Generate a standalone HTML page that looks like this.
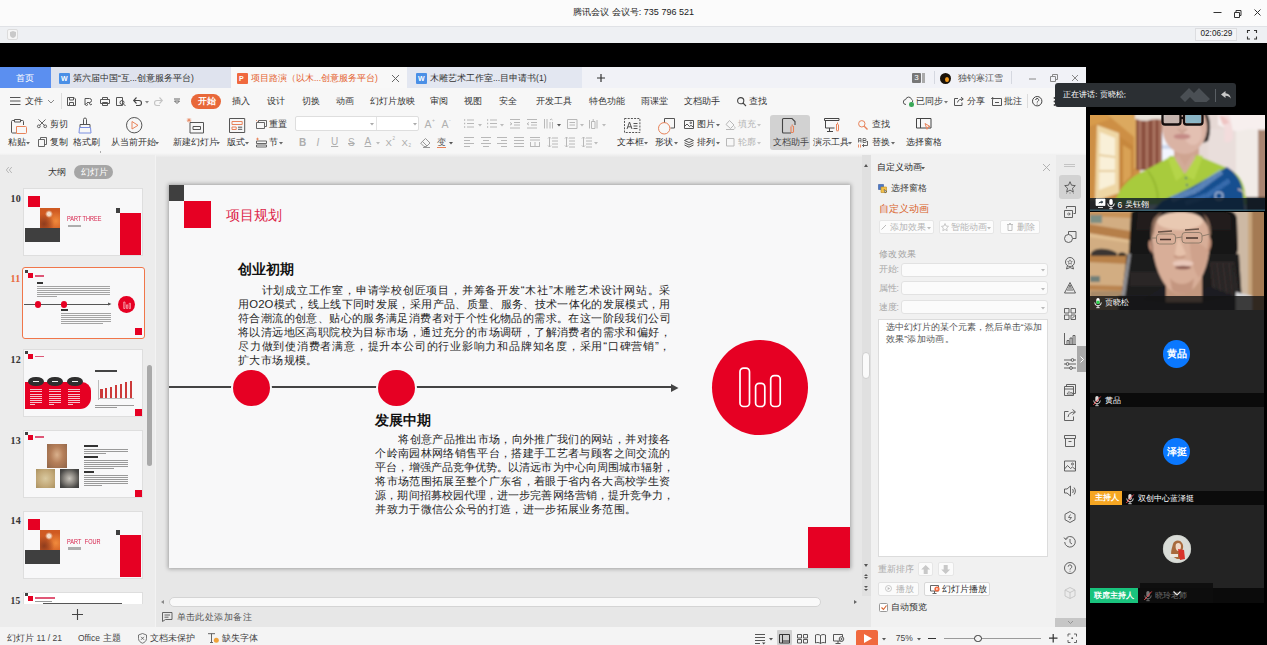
<!DOCTYPE html>
<html lang="zh">
<head>
<meta charset="utf-8">
<title>腾讯会议</title>
<style>
@font-face{font-family:"LibCJK";src:local("Liberation Sans");size-adjust:128%;unicode-range:U+2E80-9FFF,U+3000-303F,U+FF00-FFEF}
html,body{margin:0;padding:0}
body{width:1267px;height:645px;position:relative;overflow:hidden;background:#000;font-family:"LibCJK","Liberation Sans",sans-serif;font-size:8.5px;color:#333;line-height:1}
.a{position:absolute;box-sizing:border-box}
.t{position:absolute;white-space:nowrap;text-align:justify;text-align-last:justify;line-height:1}
.c{position:absolute;white-space:nowrap;text-align:center;line-height:1}
svg{position:absolute;overflow:visible}

</style>
</head>
<body>
<!-- p10_chrome -->
<div class="a" style="left:0px;top:0px;width:1267px;height:26px;background:#fbfbfb"></div>
<div class="t" style="left:573px;top:8px;width:121px;font-size:9px;color:#222">腾讯会议 会议号: 735 796 521</div>
<svg style="left:1211px;top:5px" width="52" height="15" fill="none" stroke="#333" stroke-width="1"><path d="M2.5 7.5h8"/><path d="M23.500 7.500h5v5h-5z M25 7.500V5.500h5v5h-1.500"/><path d="M43.5 4.500l6 6M49.500 4.500l-6 6"/></svg>
<div class="a" style="left:0px;top:26px;width:1267px;height:17px;background:#eef0f3;border-top:1px solid #e0e2e6"></div>
<div class="a" style="left:7px;top:28.5px;width:11px;height:11px;background:#f6f6f6;border:1px solid #dcdcdc;border-radius:2px"></div>
<svg style="left:10px;top:30.5px" width="6" height="7" ><path d="M3 0l3 1v3c0 1.600-1.500 2.600-3 3-1.500-.4-3-1.400-3-3V1z" fill="#c9c9c9"/></svg>
<div class="a" style="left:1195px;top:27.5px;width:42px;height:13.5px;background:#f3f4f6;border:1px solid #dcdde0"></div>
<div class="t" style="left:1200.5px;top:30.4px;width:31.5px;font-size:8.2px;color:#222">02:06:29</div>
<svg style="left:1246.5px;top:29.5px" width="10" height="9.5" fill="none" stroke="#333" stroke-width="1.1"><path d="M.5 3V.5H3M7 .5h2.500V3M9.500 6.500V9H7M3 9H.5V6.500"/></svg>
<div class="a" style="left:0px;top:67px;width:1086px;height:578px;background:#f6f6f6"></div>
<div class="a" style="left:0px;top:67px;width:1086px;height:21px;background:#f1f2f7"></div>
<div class="a" style="left:0px;top:87.5px;width:1086px;height:1px;background:#e6e8ee"></div>
<div class="a" style="left:0px;top:67px;width:51px;height:21px;background:#5b8ff0"></div>
<div class="t" style="left:16px;top:74.25px;width:18px;font-size:8.5px;color:#fff">首页</div>
<div class="a" style="left:51px;top:67px;width:180px;height:21px;background:#dfe3ee"></div>
<div class="a" style="left:59px;top:72.5px;width:11px;height:11px;background:#4a8fe6;border-radius:1px"></div>
<div class="t" style="left:61px;top:75px;width:7px;font-size:7px;color:#fff;font-weight:bold">W</div>
<div class="t" style="left:73px;top:74.25px;width:120px;font-size:8.5px;color:#333">第六届中国“互...创意服务平台)</div>
<div class="a" style="left:231px;top:67px;width:176px;height:21px;background:#f8f8f8"></div>
<div class="a" style="left:237px;top:72.5px;width:11px;height:11px;background:#f0693e;border-radius:1px"></div>
<div class="t" style="left:239px;top:75px;width:7px;font-size:7px;color:#fff;font-weight:bold">P</div>
<div class="t" style="left:251px;top:74.25px;width:121px;font-size:8.5px;color:#e4622f">项目路演（以木...创意服务平台)</div>
<svg style="left:392px;top:75px" width="7" height="7" stroke="#666" stroke-width="1"><path d="M0 0l7 7M7 0l-7 7"/></svg>
<div class="a" style="left:407px;top:67px;width:175px;height:21px;background:#e3e7f1"></div>
<div class="a" style="left:416px;top:72.5px;width:11px;height:11px;background:#4a8fe6;border-radius:1px"></div>
<div class="t" style="left:418px;top:75px;width:7px;font-size:7px;color:#fff;font-weight:bold">W</div>
<div class="t" style="left:430px;top:74.25px;width:111px;font-size:8.5px;color:#333">木雕艺术工作室...目申请书(1)</div>
<svg style="left:597px;top:74px" width="8" height="8" stroke="#333" stroke-width="1.2"><path d="M4 0v8M0 4h8"/></svg>
<div class="a" style="left:912px;top:73px;width:9px;height:10px;background:#777;border-radius:1px"></div>
<div class="t" style="left:914.3px;top:74.3px;width:5px;font-size:8px;color:#fff">3</div>
<div class="a" style="left:922px;top:73px;width:3px;height:10px;background:#aaa"></div>
<div class="a" style="left:934px;top:71px;width:1px;height:13px;background:#d5d8e0"></div>
<div class="a" style="left:940px;top:72.5px;width:11px;height:11px;background:#1a1208;border-radius:50%"></div>
<div class="a" style="left:945px;top:77px;width:4px;height:5px;background:#f59b1c;border-radius:50%"></div>
<div class="t" style="left:958px;top:74.25px;width:42px;font-size:8.5px;color:#555">独钓寒江雪</div>
<div class="a" style="left:1011px;top:71px;width:1px;height:13px;background:#d5d8e0"></div>
<svg style="left:1029px;top:72px" width="50" height="12" fill="none" stroke="#888" stroke-width="1"><path d="M0 7h7"/><path d="M21.500 4.500h5v5h-5z M23.500 4.500V2.500h5v5h-2"/><path d="M43 3l6 6M49 3l-6 6"/></svg>

<!-- p20_menu -->
<div class="a" style="left:0px;top:88px;width:1086px;height:67px;background:#f7f7f7"></div>
<svg style="left:10px;top:97px" width="11" height="8" stroke="#555" stroke-width="1"><path d="M0 .5h10.500M0 4h10.500M0 7.500h10.500"/></svg>
<div class="t" style="left:24.7px;top:96.75px;width:17px;font-size:8.5px;color:#333">文件</div>
<svg style="left:47.5px;top:99.5px" width="6" height="4" fill="none" stroke="#888" stroke-width="1"><path d="M0 0l3 3 3-3"/></svg>
<div class="a" style="left:60.5px;top:93px;width:1px;height:16px;background:#dcdcdc"></div>
<svg style="left:67px;top:96.5px" width="9" height="9" fill="none" stroke="#555" stroke-width="1"><path d="M.5 .5h6.500l1.500 1.500v6.500h-8z M2.500 .5v2.500h4V.5 M2.500 8.500v-3h4v3"/></svg>
<svg style="left:84px;top:96.5px" width="9" height="9" fill="none" stroke="#555" stroke-width="1"><path d="M1 1.500h4.500a2 2 0 0 1 0 4H3 M1 1.500V8 M5 5.500l1.500 2.500 1.500-1"/><circle cx="2.500" cy="7.500" r="1"/></svg>
<svg style="left:100px;top:96.5px" width="10" height="9" fill="none" stroke="#555" stroke-width="1"><path d="M2.500 2.500V.5h5v2 M.5 2.500h9v4h-9z M2.500 5.500h5v3h-5z"/></svg>
<svg style="left:116px;top:96.5px" width="10" height="9" fill="none" stroke="#555" stroke-width="1"><path d="M.5 .5h6v8h-6z"/><circle cx="6" cy="5.500" r="2"/><path d="M7.500 7l2 2"/></svg>
<svg style="left:133px;top:97px" width="9" height="8" fill="none" stroke="#444" stroke-width="1.1"><path d="M1 3.500h5a2.500 2.500 0 0 1 0 5H3 M3.500 .5L.7 3.500l2.800 3"/></svg>
<svg style="left:145px;top:100.5px" width="4" height="3" ><path d="M0 0h4L2 2.500z" fill="#888"/></svg>
<svg style="left:154px;top:97px" width="9" height="8" fill="none" stroke="#c4c4c4" stroke-width="1.1"><path d="M8 3.500H3a2.500 2.500 0 0 0 0 5h3 M5.500 .5l2.800 3-2.800 3"/></svg>
<svg style="left:174px;top:99px" width="6" height="5" fill="none" stroke="#555" stroke-width=".9"><path d="M0 0h6M.5 2l2.500 2.500 2.500-2.500z"/></svg>
<div class="a" style="left:190.5px;top:94px;width:30.5px;height:14.5px;background:#e8683a;border-radius:7.5px"></div>
<div class="t" style="left:197.5px;top:97.05px;width:16.5px;font-size:8.5px;color:#fff;font-weight:bold">开始</div>
<div class="t" style="left:232.3px;top:97.05px;width:16.5px;font-size:8.5px;color:#333">插入</div>
<div class="t" style="left:267px;top:97.05px;width:16.5px;font-size:8.5px;color:#333">设计</div>
<div class="t" style="left:301.5px;top:97.05px;width:16.5px;font-size:8.5px;color:#333">切换</div>
<div class="t" style="left:335.6px;top:97.05px;width:16.8px;font-size:8.5px;color:#333">动画</div>
<div class="t" style="left:370px;top:97.05px;width:42.6px;font-size:8.5px;color:#333">幻灯片放映</div>
<div class="t" style="left:430px;top:97.05px;width:16.7px;font-size:8.5px;color:#333">审阅</div>
<div class="t" style="left:464.3px;top:97.05px;width:16.7px;font-size:8.5px;color:#333">视图</div>
<div class="t" style="left:499px;top:97.05px;width:16.6px;font-size:8.5px;color:#333">安全</div>
<div class="t" style="left:535.6px;top:97.05px;width:34px;font-size:8.5px;color:#333">开发工具</div>
<div class="t" style="left:589.3px;top:97.05px;width:34.1px;font-size:8.5px;color:#333">特色功能</div>
<div class="t" style="left:640.6px;top:97.05px;width:26px;font-size:8.5px;color:#333">雨课堂</div>
<div class="t" style="left:684px;top:97.05px;width:34px;font-size:8.5px;color:#333">文档助手</div>
<div class="t" style="left:748.7px;top:97.05px;width:16.9px;font-size:8.5px;color:#333">查找</div>
<div class="t" style="left:916px;top:97.05px;width:25.3px;font-size:8.5px;color:#333">已同步</div>
<div class="t" style="left:967.3px;top:97.05px;width:16.4px;font-size:8.5px;color:#333">分享</div>
<div class="t" style="left:1004.4px;top:97.05px;width:16.5px;font-size:8.5px;color:#333">批注</div>
<svg style="left:737px;top:96.5px" width="9" height="9" fill="none" stroke="#444" stroke-width="1.1"><circle cx="3.700" cy="3.700" r="3.100"/><path d="M6 6l3 3"/></svg>
<svg style="left:903px;top:97px" width="11" height="9" fill="none" stroke="#555" stroke-width="1"><path d="M3 7.500a2.500 2.500 0 0 1-.3-5 3 3 0 0 1 5.800-.3A2.300 2.300 0 0 1 9.500 5"/></svg>
<div class="a" style="left:909px;top:102px;width:4.5px;height:4.5px;background:#3aa757;border-radius:50%"></div>
<svg style="left:943.5px;top:100.5px" width="4" height="3" ><path d="M0 0h4L2 2.500z" fill="#777"/></svg>
<svg style="left:954px;top:96.5px" width="10" height="9" fill="none" stroke="#555" stroke-width="1"><path d="M4 1.500H.500v7h7.500V5.500 M3.500 5.500c.5-2.500 2.500-3.500 5.500-3.500 M7 .2L9.300 2 7 3.800"/></svg>
<svg style="left:991px;top:96.5px" width="11" height="9" fill="none" stroke="#555" stroke-width="1"><path d="M3 1.500h7.500v7h-9V3 M.2 1.500h3M1.700 0v3 M4 5.500h4"/></svg>
<div class="a" style="left:1026.5px;top:94px;width:1px;height:14px;background:#dcdcdc"></div>
<svg style="left:1032px;top:96px" width="10.5" height="10.5" fill="none" stroke="#444" stroke-width="1"><circle cx="5.200" cy="5.200" r="4.700"/><path d="M3.700 4a1.500 1.500 0 1 1 2.200 1.300c-.5.3-.7.600-.7 1.200M5.200 7.700v.8"/></svg>
<svg style="left:1053px;top:97px" width="3" height="9" fill="#444"><circle cx="1.500" cy="1" r=".9"/><circle cx="1.500" cy="4.500" r=".9"/><circle cx="1.500" cy="8" r=".9"/></svg>

<!-- p30_ribbon -->
<svg style="left:10.5px;top:117.5px" width="16" height="16" fill="none" stroke-width="1"><path d="M3.500 2.500H1.500a1 1 0 0 0-1 1V14a1 1 0 0 0 1 1H5 M9.500 2.500h2a1 1 0 0 1 1 1V7" stroke="#555"/><path d="M3.500 1.500h6v2.500h-6z" stroke="#555"/><path d="M5.500 8.500h9a1 1 0 0 1 1 1v5a1 1 0 0 1-1 1h-9z" stroke="#e8835a"/></svg>
<div class="t" style="left:7.6px;top:138.05px;width:17px;font-size:8.5px">粘贴</div>
<svg style="left:26.3px;top:141.8px" width="4" height="3" ><path d="M0 0h4L2 2.500z" fill="#666"/></svg>
<svg style="left:37px;top:119px" width="10" height="9" fill="none" stroke="#555" stroke-width=".9"><path d="M1.500 .5l6 6M8.500 .5l-6 6"/><circle cx="1.800" cy="7.300" r="1.400"/><circle cx="8.200" cy="7.300" r="1.400"/></svg>
<div class="t" style="left:49.7px;top:120.05px;width:16.5px;font-size:8.5px">剪切</div>
<svg style="left:37.5px;top:137px" width="9" height="10" fill="none" stroke="#555" stroke-width=".9"><path d="M2.500 2.500V.5h6v7h-2 M.5 2.500h6v7h-6z"/></svg>
<div class="t" style="left:49.7px;top:138.05px;width:16.5px;font-size:8.5px">复制</div>
<svg style="left:78px;top:117.5px" width="14" height="16" fill="none" stroke-width="1"><path d="M5.500 6.500V1.500a1.500 1.500 0 0 1 3 0v5" stroke="#555"/><path d="M2 6.500h10v3H2z" stroke="#555"/><path d="M1.500 9.500h11l.5 5.500H1z" stroke="#7b8fe0"/></svg>
<div class="t" style="left:72.7px;top:138.05px;width:25px;font-size:8.5px">格式刷</div>
<svg style="left:97.5px;top:150.5px" width="3" height="3" fill="none" stroke="#999" stroke-width=".8"><path d="M0 2.500h2.500V0"/></svg>
<svg style="left:126px;top:117px" width="16.5" height="16.5" fill="none" stroke-width="1"><circle cx="8.200" cy="8.200" r="7.700" stroke="#555"/><path d="M6 4.500v7.500l6-3.700z" stroke="#e8835a"/></svg>
<div class="t" style="left:111px;top:138.05px;width:41.8px;font-size:8.5px">从当前开始</div>
<svg style="left:154.6px;top:141.8px" width="4" height="3" ><path d="M0 0h4L2 2.500z" fill="#666"/></svg>
<svg style="left:187px;top:117.5px" width="17" height="16" fill="none" stroke-width="1"><path d="M3 4.500h13.500v10.500H3z" stroke="#555"/><path d="M6 8.500h7.500v3H6z" stroke="#555"/><path d="M2 0v4.500M-.2 2.200h4.500M.4 .6l3.200 3.200M3.600 .6L.4 3.800" stroke="#e8835a" stroke-width=".8"/></svg>
<div class="t" style="left:172.5px;top:138.05px;width:41.5px;font-size:8.5px">新建幻灯片</div>
<svg style="left:215.7px;top:141.8px" width="4" height="3" ><path d="M0 0h4L2 2.500z" fill="#666"/></svg>
<svg style="left:229.3px;top:118px" width="16.2" height="15" fill="none" stroke-width="1"><path d="M.5 .5h15.200v14H.5z" stroke="#555"/><path d="M3 3.500h10.200v3H3z M3 9h4.200v2.500H3z" stroke="#e8835a"/><path d="M9 9.200h4.200M9 11.300h4.200" stroke="#555"/></svg>
<div class="t" style="left:226.5px;top:138.05px;width:16.7px;font-size:8.5px">版式</div>
<svg style="left:245px;top:141.8px" width="4" height="3" ><path d="M0 0h4L2 2.500z" fill="#666"/></svg>
<svg style="left:256px;top:119.5px" width="11" height="9" fill="none" stroke-width=".9"><path d="M2.500 2V.5h8v6H9" stroke="#555"/><path d="M.5 2.500h8v6h-8z" stroke="#555"/><path d="M0 0l1.500 1.500" stroke="#e8835a"/></svg>
<div class="t" style="left:269px;top:120.05px;width:16.4px;font-size:8.5px">重置</div>
<svg style="left:256px;top:137.5px" width="11" height="9" fill="none" stroke-width=".9"><path d="M.5 3h10v2.500H.5z M.5 7h10v2H.5z" stroke="#555"/><path d="M1.500 -.3v2.600M.2 1h2.600" stroke="#e8835a"/></svg>
<div class="t" style="left:269px;top:138.05px;width:8px;font-size:8.5px">节</div>
<svg style="left:278.8px;top:141.8px" width="4" height="3" ><path d="M0 0h4L2 2.500z" fill="#666"/></svg>
<div class="a" style="left:295px;top:116px;width:124px;height:15px;background:#fff;border:1px solid #dedede;border-radius:2px"></div>
<div class="a" style="left:376px;top:117px;width:1px;height:13px;background:#e3e3e3"></div>
<svg style="left:370px;top:123px" width="4" height="3" ><path d="M0 0h4L2 2.500z" fill="#aaa"/></svg>
<svg style="left:413px;top:123px" width="4" height="3" ><path d="M0 0h4L2 2.500z" fill="#aaa"/></svg>
<div class="t" style="left:424.5px;top:119.25px;width:7px;font-size:10.5px;color:#b0b0b0">A</div>
<div class="t" style="left:432px;top:118px;width:3px;font-size:5px;color:#b0b0b0">+</div>
<div class="t" style="left:441.5px;top:119.25px;width:7px;font-size:10.5px;color:#b0b0b0">A</div>
<div class="t" style="left:449px;top:118px;width:3px;font-size:5px;color:#b0b0b0">-</div>
<svg style="left:464.4px;top:119px" width="10" height="10" fill="none" stroke="#b8b8b8" stroke-width="1"><path d="M3 1h7M3 4.500h7M3 8h7"/><path d="M0 1h1.200M0 4.500h1.200M0 8h1.200" stroke-width="1.300"/></svg>
<svg style="left:477.5px;top:123.5px" width="4" height="3" ><path d="M0 0h4L2 2.500z" fill="#bbb"/></svg>
<svg style="left:486.6px;top:119px" width="10" height="10" fill="none" stroke="#b8b8b8" stroke-width="1"><path d="M3 1h7M3 4.500h7M3 8h7"/><path d="M0 1h1.200M0 4.500h1.200M0 8h1.200" stroke-width="1.300"/></svg>
<svg style="left:499.5px;top:123.5px" width="4" height="3" ><path d="M0 0h4L2 2.500z" fill="#bbb"/></svg>
<svg style="left:510.4px;top:119px" width="10" height="10" fill="none" stroke="#b8b8b8" stroke-width="1"><path d="M0 .5h10M4 3.500h6M4 6h6M0 9h10M0 3.500l2 1.300-2 1.300"/></svg>
<svg style="left:526.8px;top:119px" width="10" height="10" fill="none" stroke="#b8b8b8" stroke-width="1"><path d="M0 .5h10M4 3.500h6M4 6h6M0 9h10M2 3.500l-2 1.300 2 1.300"/></svg>
<svg style="left:544px;top:119px" width="10" height="10" fill="none" stroke="#b8b8b8" stroke-width="1"><path d="M.5 0v9.500M3 0v9.500M6 3v6.500M8.500 3v6.500M6 1l1.200-1 1.300 1"/></svg>
<svg style="left:557px;top:123.5px" width="4" height="3" ><path d="M0 0h4L2 2.500z" fill="#555"/></svg>
<svg style="left:566.7px;top:119px" width="10" height="10" fill="none" stroke="#b8b8b8" stroke-width="1"><path d="M.5 .5h9.500v9H.5z M2.500 3.500h5.500M2.500 6h5.500"/></svg>
<svg style="left:579.8px;top:123.5px" width="4" height="3" ><path d="M0 0h4L2 2.500z" fill="#bbb"/></svg>
<svg style="left:588.9px;top:119px" width="10" height="10" fill="none" stroke="#b8b8b8" stroke-width="1"><path d="M2.500 2.500h3.500v7H2.500z M4.200 0v2.500 M.5 1v8.500M8 1v8.500"/></svg>
<svg style="left:602px;top:123.5px" width="4" height="3" ><path d="M0 0h4L2 2.500z" fill="#bbb"/></svg>
<svg style="left:464.4px;top:137px" width="10" height="10" fill="none" stroke="#b8b8b8" stroke-width="1"><path d="M0 .5h10M0 3.500h6M0 6.500h10M0 9.500h6"/></svg>
<svg style="left:480.8px;top:137px" width="10" height="10" fill="none" stroke="#b8b8b8" stroke-width="1"><path d="M0 .5h10M2 3.500h6M0 6.500h10M2 9.500h6"/></svg>
<svg style="left:497.2px;top:137px" width="10" height="10" fill="none" stroke="#b8b8b8" stroke-width="1"><path d="M0 .5h10M4 3.500h6M0 6.500h10M4 9.500h6"/></svg>
<svg style="left:513.6px;top:137px" width="10" height="10" fill="none" stroke="#b8b8b8" stroke-width="1"><path d="M0 .5h10M0 3.500h10M0 6.500h10M0 9.500h10"/></svg>
<svg style="left:530px;top:137px" width="10" height="10" fill="none" stroke="#b8b8b8" stroke-width="1"><path d="M0 .5h10M0 3h10M.5 5v4M5 5v4M9.500 5v4M0 9.500h10"/></svg>
<svg style="left:548.2px;top:137px" width="10" height="10" fill="none" stroke="#b8b8b8" stroke-width="1"><path d="M4 1h6M4 4h6M4 7h6M4 10h6M1.500 0v10M0 1.500L1.500 0 3 1.500M0 8.500L1.500 10 3 8.500" /></svg>
<svg style="left:564.9px;top:137px" width="10" height="10" fill="none" stroke="#b8b8b8" stroke-width="1"><path d="M4 1h6M4 4h6M4 7h6M4 10h6M1.500 0v10M0 1.500L1.500 0 3 1.500M0 8.500L1.500 10 3 8.500" /></svg>
<svg style="left:581.8px;top:137px" width="10" height="10" fill="none" stroke="#b8b8b8" stroke-width="1"><path d="M4 1h6M4 4h6M4 7h6M4 10h6M1.500 0v10M0 1.500L1.500 0 3 1.500M0 8.500L1.500 10 3 8.500" /></svg>
<svg style="left:593.7px;top:141.5px" width="4" height="3" ><path d="M0 0h4L2 2.500z" fill="#bbb"/></svg>
<div class="t" style="left:299px;top:137.5px;width:7px;font-size:10px;color:#adadad;font-weight:bold">B</div>
<div class="t" style="left:316.5px;top:137.5px;width:4px;font-size:10px;color:#adadad;font-style:italic">I</div>
<div class="t" style="left:331px;top:137.2px;width:7.5px;font-size:10px;color:#adadad;text-decoration:underline">U</div>
<div class="t" style="left:348px;top:137.5px;width:7px;font-size:10px;color:#adadad;text-decoration:line-through">S</div>
<div class="t" style="left:364.5px;top:137px;width:7px;font-size:10px;color:#adadad;text-decoration:underline">A</div>
<svg style="left:376px;top:141.5px" width="4" height="3" ><path d="M0 0h4L2 2.500z" fill="#bbb"/></svg>
<div class="t" style="left:385.5px;top:138.25px;width:7px;font-size:9.5px;color:#adadad">X</div>
<div class="t" style="left:392.5px;top:136.75px;width:3px;font-size:4.5px;color:#adadad">2</div>
<div class="t" style="left:401.5px;top:138.25px;width:7px;font-size:9.5px;color:#adadad">X</div>
<div class="t" style="left:408.5px;top:143.75px;width:3px;font-size:4.5px;color:#adadad">2</div>
<svg style="left:419.5px;top:137.5px" width="11" height="10" fill="none" stroke="#8c8c8c" stroke-width=".9"><path d="M4 8.500L.700 5.200 5.500 .5l4.500 4.500L6.500 8.500z M2.500 3.500l4.500 4.500 M3 9.500h7"/></svg>
<div class="t" style="left:436.5px;top:137.8px;width:9px;font-size:9px;color:#555">变</div>
<div class="a" style="left:436.5px;top:146.5px;width:9px;height:1px;background:#e8835a"></div>
<svg style="left:449.2px;top:141.5px" width="4" height="3" ><path d="M0 0h4L2 2.500z" fill="#555"/></svg>
<svg style="left:624.2px;top:118px" width="16.4" height="15" fill="none" stroke="#555" stroke-width="1"><path d="M.5 .5h15.400v14H.5z" stroke-dasharray="2 1.200"/><path d="M3 11l2.500-7 2.500 7M3.800 8.800h3.400M9.500 5.500h4M9.500 8h4M9.500 10.500h4" /></svg>
<div class="t" style="left:617.4px;top:138.05px;width:25.2px;font-size:8.5px">文本框</div>
<svg style="left:644.2px;top:141.8px" width="4" height="3" ><path d="M0 0h4L2 2.500z" fill="#666"/></svg>
<svg style="left:658.3px;top:117.5px" width="17" height="16.5" fill="none" stroke-width="1"><path d="M6.500 5V.5h10v9.500H12.500" stroke="#555"/><circle cx="6.200" cy="10.300" r="5.700" stroke="#e8835a"/></svg>
<div class="t" style="left:655px;top:138.05px;width:16.7px;font-size:8.5px">形状</div>
<svg style="left:673.5px;top:141.8px" width="4" height="3" ><path d="M0 0h4L2 2.500z" fill="#666"/></svg>
<svg style="left:683.5px;top:119.5px" width="10" height="9" fill="none" stroke="#555" stroke-width="1"><path d="M.5 .5h9v8h-9z M.5 6.500l2.500-2.500 2.500 2.500 1.500-1.200 2.500 2"/><circle cx="6.800" cy="2.800" r=".8"/></svg>
<div class="t" style="left:696.9px;top:120.05px;width:16.4px;font-size:8.5px">图片</div>
<svg style="left:715.6px;top:123.8px" width="4" height="3" ><path d="M0 0h4L2 2.500z" fill="#666"/></svg>
<svg style="left:683.5px;top:137.5px" width="10" height="9.5" fill="none" stroke="#555" stroke-width="1"><path d="M5 .5l4.500 2L5 4.500 .5 2.500z M.5 4.800L5 7l4.500-2.200 M.5 7L5 9.200 9.500 7"/></svg>
<div class="t" style="left:696.9px;top:138.05px;width:16.4px;font-size:8.5px">排列</div>
<svg style="left:715.6px;top:141.8px" width="4" height="3" ><path d="M0 0h4L2 2.500z" fill="#666"/></svg>
<svg style="left:725px;top:119.5px" width="11" height="10" fill="none" stroke="#b8b8b8" stroke-width="1"><path d="M4.500 .5L9 5 5.500 8.500 1 4.500z M9.500 6.500c.8 1 .8 2 0 2.300M1 9.500h8"/></svg>
<div class="t" style="left:738.3px;top:120.05px;width:16.4px;font-size:8.5px;color:#b5b5b5">填充</div>
<svg style="left:756.8px;top:123.8px" width="4" height="3" ><path d="M0 0h4L2 2.500z" fill="#c4c4c4"/></svg>
<svg style="left:726px;top:138px" width="8.5" height="8.5" fill="none" stroke="#b8b8b8" stroke-width="1"><path d="M.5 .5h7.500v7.500H.5z"/></svg>
<div class="t" style="left:738.3px;top:138.05px;width:16.4px;font-size:8.5px;color:#b5b5b5">轮廓</div>
<svg style="left:756.8px;top:141.8px" width="4" height="3" ><path d="M0 0h4L2 2.500z" fill="#c4c4c4"/></svg>
<div class="a" style="left:770px;top:115px;width:39.5px;height:34.5px;background:#d2d2d2;border-radius:3px"></div>
<svg style="left:782px;top:117.5px" width="14" height="16" fill="none" stroke-width="1.100"><path d="M9 15H1.500a1 1 0 0 1-1-1V1.500a1 1 0 0 1 1-1H10l3 3V7" stroke="#444"/><path d="M9 8.500v5.500M11.500 8v6M9 14.500h2.500M10.200 6.500v2" stroke="#e8835a"/></svg>
<div class="t" style="left:773.2px;top:138.05px;width:33.3px;font-size:8.5px;color:#444">文档助手</div>
<svg style="left:824px;top:118px" width="16.5" height="15" fill="none" stroke-width="1"><path d="M.5 .5h14.500v2H.5z M1.500 2.500v7.500h9 M5.500 10v3M3 13.500h6" stroke="#444"/><path d="M12.500 6v6.500M14.500 6.500v6M12.500 12.800h2M13.500 4.500v2" stroke="#e8835a"/></svg>
<div class="t" style="left:812.8px;top:138.05px;width:33.6px;font-size:8.5px">演示工具</div>
<svg style="left:848.2px;top:141.8px" width="4" height="3" ><path d="M0 0h4L2 2.500z" fill="#666"/></svg>
<svg style="left:858px;top:119.5px" width="10" height="10" fill="none" stroke-width="1"><circle cx="3.800" cy="3.800" r="3.200" stroke="#e8835a"/><path d="M6.200 6.200l3.300 3.300" stroke="#e8835a" stroke-width="1.400"/></svg>
<div class="t" style="left:871.7px;top:120.05px;width:16.9px;font-size:8.5px">查找</div>
<svg style="left:857.5px;top:137.5px" width="12" height="10" fill="none" stroke-width=".9"><path d="M.5 4.500V.5h2.500v4M.5 2.800h2.500 M5 .5h2a1 1 0 0 1 0 2H5zM5 2.500h2.300a1 1 0 0 1 0 2H5z" stroke="#555" stroke-width=".8"/><path d="M9.500 3v4.500H4.500M6 6l-1.500 1.500L6 9" stroke="#555"/><path d="M.5 6.500v3M2.500 6.500v3" stroke="#e8835a"/></svg>
<div class="t" style="left:871.7px;top:138.05px;width:16.9px;font-size:8.5px">替换</div>
<svg style="left:890.6px;top:141.8px" width="4" height="3" ><path d="M0 0h4L2 2.500z" fill="#666"/></svg>
<svg style="left:915.6px;top:118px" width="15.6" height="15" fill="none" stroke-width="1"><path d="M.5 .5h14.500v9.500H.5z M4.500 .5v9.500" stroke="#444"/><path d="M9 5.500l5 3-2.200.5-.8 2.300z" stroke="#e8835a" fill="#f7f7f7"/></svg>
<div class="t" style="left:906.2px;top:138.05px;width:33.8px;font-size:8.5px">选择窗格</div>

<!-- p40_work -->
<div class="a" style="left:0px;top:155px;width:1086px;height:472px;background:#e7e7e7"></div>
<div class="a" style="left:0px;top:152.5px;width:1086px;height:4.5px;background:linear-gradient(#f7f7f7,#e9e9e9)"></div>
<div class="a" style="left:0px;top:155px;width:155px;height:472px;background:#ececec"></div>
<div class="a" style="left:154.5px;top:155px;width:1.5px;height:472px;background:#f3f3f3"></div>
<svg style="left:5.5px;top:167px" width="6" height="6" fill="none" stroke="#aaa" stroke-width=".8"><path d="M2.800 0L.3 3l2.500 3M5.800 0L3.300 3l2.500 3"/></svg>
<div class="t" style="left:48px;top:167.55px;width:17.5px;font-size:8.5px;color:#333">大纲</div>
<div class="a" style="left:73.7px;top:164.7px;width:39.7px;height:14px;background:#a6a6a6;border-radius:7px"></div>
<div class="t" style="left:80.5px;top:167.55px;width:26px;font-size:8.5px;color:#fff">幻灯片</div>
<div class="t" style="left:10.5px;top:193.5px;width:10.5px;font-size:10px;color:#333;font-family:'Liberation Serif',serif;font-weight:bold;letter-spacing:.3px">10</div>
<div class="a" style="left:22.5px;top:188px;width:120px;height:68px;background:#f8f8f9;border:1px solid #dedede"></div>
<div class="a" style="left:28px;top:196px;width:11.5px;height:11px;background:#e60023"></div>
<div class="a" style="left:40px;top:207.5px;width:19.5px;height:20px;background:#c8541f;background:radial-gradient(circle at 45% 30%,#f3dcc8 0,#f3dcc8 9%,rgba(243,220,200,0) 22%),radial-gradient(circle at 20% 80%,#8f3d1e 0,rgba(143,61,30,0) 45%),radial-gradient(circle at 80% 65%,#f08a3c 0,rgba(240,138,60,0) 50%),#cf5a22"></div>
<div class="a" style="left:25px;top:227.5px;width:34.5px;height:14px;background:#3f3f3f"></div>
<div class="t" style="left:67.3px;top:215.2px;width:46px;font-size:7.6px;color:#d6204a;transform:scaleX(.73);transform-origin:0 50%">PART THREE</div>
<div class="a" style="left:67.5px;top:224.5px;width:13px;height:2.5px;background:#9a9a9a;opacity:.8"></div>
<div class="a" style="left:115.7px;top:207.5px;width:4.7px;height:5px;background:#3f3f3f"></div>
<div class="a" style="left:120.4px;top:212.5px;width:20.6px;height:42px;background:#e60023"></div>
<div class="t" style="left:10.5px;top:274.2px;width:10.5px;font-size:10px;color:#e8683a;font-family:'Liberation Serif',serif;font-weight:bold;letter-spacing:.3px">11</div>
<div class="a" style="left:21.5px;top:267.2px;width:123.5px;height:71.5px;background:#f8f8f9;border:1.500px solid #f0764a;border-radius:3px"></div>
<div class="a" style="left:24.5px;top:270.2px;width:3px;height:3px;background:#3f3f3f"></div>
<div class="a" style="left:27.5px;top:273.2px;width:5px;height:5px;background:#e60023"></div>
<div class="a" style="left:34.5px;top:274.9px;width:9px;height:1.8px;background:#d6204a;opacity:.75"></div>
<div class="a" style="left:36.5px;top:282.2px;width:6px;height:1.6px;background:#333"></div>
<div class="a" style="left:36.5px;top:285.5px;width:73px;height:1px;background:#a4a4a4"></div>
<div class="a" style="left:36.5px;top:287.55px;width:73px;height:1px;background:#a4a4a4"></div>
<div class="a" style="left:36.5px;top:289.6px;width:73px;height:1px;background:#a4a4a4"></div>
<div class="a" style="left:36.5px;top:291.65px;width:73px;height:1px;background:#a4a4a4"></div>
<div class="a" style="left:36.5px;top:293.7px;width:73px;height:1px;background:#a4a4a4"></div>
<div class="a" style="left:36.5px;top:295.75px;width:20px;height:1px;background:#a4a4a4"></div>
<div class="a" style="left:24px;top:303.9px;width:86px;height:0.8px;background:#555"></div>
<svg style="left:108px;top:302.2px" width="4" height="4" ><path d="M0 .5l3.500 1.500L0 3.500z" fill="#555"/></svg>
<div class="a" style="left:35px;top:301.2px;width:6.4px;height:6.4px;background:#e60023;border-radius:50%"></div>
<div class="a" style="left:60.5px;top:301.2px;width:6.4px;height:6.4px;background:#e60023;border-radius:50%"></div>
<div class="a" style="left:60.5px;top:309.2px;width:7px;height:1.6px;background:#333"></div>
<div class="a" style="left:60.5px;top:312.9px;width:50px;height:1px;background:#a4a4a4"></div>
<div class="a" style="left:60.5px;top:314.95px;width:50px;height:1px;background:#a4a4a4"></div>
<div class="a" style="left:60.5px;top:317px;width:50px;height:1px;background:#a4a4a4"></div>
<div class="a" style="left:60.5px;top:319.05px;width:50px;height:1px;background:#a4a4a4"></div>
<div class="a" style="left:60.5px;top:321.1px;width:50px;height:1px;background:#a4a4a4"></div>
<div class="a" style="left:60.5px;top:323.15px;width:42px;height:1px;background:#a4a4a4"></div>
<div class="a" style="left:117.8px;top:295.9px;width:16.8px;height:16.8px;background:#e60023;border-radius:50%"></div>
<svg style="left:122.5px;top:300.7px" width="8" height="8" fill="none" stroke="#fff" stroke-width=".5"><path d="M.7 7.500V1h1.300v6.500z M3.500 7.500V3.800h1.200v3.700z M6.200 7.500V2.300h1.300v5.200z"/></svg>
<div class="a" style="left:134.7px;top:328.2px;width:7.3px;height:7.3px;background:#e60023"></div>
<div class="t" style="left:10.5px;top:354.9px;width:10.5px;font-size:10px;color:#333;font-family:'Liberation Serif',serif;font-weight:bold;letter-spacing:.3px">12</div>
<div class="a" style="left:22.5px;top:349.4px;width:120px;height:68px;background:#f8f8f9;border:1px solid #dedede"></div>
<div class="a" style="left:24.5px;top:350.9px;width:3px;height:3px;background:#3f3f3f"></div>
<div class="a" style="left:27.5px;top:353.9px;width:5px;height:5px;background:#e60023"></div>
<div class="a" style="left:34.5px;top:355.6px;width:9px;height:1.8px;background:#d6204a;opacity:.75"></div>
<div class="a" style="left:24.5px;top:381.9px;width:66px;height:27.5px;background:#e60023;border-radius:0 9px 11px 0"></div>
<div class="a" style="left:28.2px;top:376.9px;width:16px;height:9.5px;background:#2e2e2e;border-radius:50%"></div>
<div class="a" style="left:33.2px;top:380.9px;width:6px;height:1.5px;background:#eee"></div>
<div class="a" style="left:29.7px;top:389.4px;width:12px;height:1px;background:#f7c3cb"></div>
<div class="a" style="left:29.7px;top:391.45px;width:12px;height:1px;background:#f7c3cb"></div>
<div class="a" style="left:29.7px;top:393.5px;width:12px;height:1px;background:#f7c3cb"></div>
<div class="a" style="left:29.7px;top:395.55px;width:12px;height:1px;background:#f7c3cb"></div>
<div class="a" style="left:29.7px;top:397.6px;width:12px;height:1px;background:#f7c3cb"></div>
<div class="a" style="left:29.7px;top:399.65px;width:12px;height:1px;background:#f7c3cb"></div>
<div class="a" style="left:29.7px;top:401.7px;width:12px;height:1px;background:#f7c3cb"></div>
<div class="a" style="left:29.7px;top:403.75px;width:5px;height:1px;background:#f7c3cb"></div>
<div class="a" style="left:47px;top:376.9px;width:16px;height:9.5px;background:#2e2e2e;border-radius:50%"></div>
<div class="a" style="left:52px;top:380.9px;width:6px;height:1.5px;background:#eee"></div>
<div class="a" style="left:48.5px;top:389.4px;width:12px;height:1px;background:#f7c3cb"></div>
<div class="a" style="left:48.5px;top:391.45px;width:12px;height:1px;background:#f7c3cb"></div>
<div class="a" style="left:48.5px;top:393.5px;width:12px;height:1px;background:#f7c3cb"></div>
<div class="a" style="left:48.5px;top:395.55px;width:12px;height:1px;background:#f7c3cb"></div>
<div class="a" style="left:48.5px;top:397.6px;width:12px;height:1px;background:#f7c3cb"></div>
<div class="a" style="left:48.5px;top:399.65px;width:12px;height:1px;background:#f7c3cb"></div>
<div class="a" style="left:48.5px;top:401.7px;width:12px;height:1px;background:#f7c3cb"></div>
<div class="a" style="left:48.5px;top:403.75px;width:5px;height:1px;background:#f7c3cb"></div>
<div class="a" style="left:66.5px;top:376.9px;width:16px;height:9.5px;background:#2e2e2e;border-radius:50%"></div>
<div class="a" style="left:71.5px;top:380.9px;width:6px;height:1.5px;background:#eee"></div>
<div class="a" style="left:68px;top:389.4px;width:12px;height:1px;background:#f7c3cb"></div>
<div class="a" style="left:68px;top:391.45px;width:12px;height:1px;background:#f7c3cb"></div>
<div class="a" style="left:68px;top:393.5px;width:12px;height:1px;background:#f7c3cb"></div>
<div class="a" style="left:68px;top:395.55px;width:12px;height:1px;background:#f7c3cb"></div>
<div class="a" style="left:68px;top:397.6px;width:12px;height:1px;background:#f7c3cb"></div>
<div class="a" style="left:68px;top:399.65px;width:12px;height:1px;background:#f7c3cb"></div>
<div class="a" style="left:68px;top:401.7px;width:12px;height:1px;background:#f7c3cb"></div>
<div class="a" style="left:68px;top:403.75px;width:5px;height:1px;background:#f7c3cb"></div>
<div class="a" style="left:95px;top:370.4px;width:22px;height:1.6px;background:#444"></div>
<div class="a" style="left:98px;top:380.4px;width:0.6px;height:20px;background:#bbb"></div>
<div class="a" style="left:100.3px;top:388.7px;width:2.3px;height:9.7px;background:#cc3a3a"></div>
<div class="a" style="left:105.2px;top:387.6px;width:2.3px;height:10.8px;background:#cc3a3a"></div>
<div class="a" style="left:110.1px;top:386.6px;width:2.3px;height:11.8px;background:#cc3a3a"></div>
<div class="a" style="left:115px;top:385.4px;width:2.3px;height:13px;background:#cc3a3a"></div>
<div class="a" style="left:119.9px;top:384.1px;width:2.3px;height:14.3px;background:#cc3a3a"></div>
<div class="a" style="left:124.8px;top:382.4px;width:2.3px;height:16px;background:#cc3a3a"></div>
<div class="a" style="left:129.7px;top:380.8px;width:2.3px;height:17.6px;background:#cc3a3a"></div>
<div class="a" style="left:98px;top:398.4px;width:36px;height:0.6px;background:#bbb"></div>
<div class="a" style="left:95px;top:404.9px;width:39px;height:0.8px;background:#9a9a9a"></div>
<div class="a" style="left:95px;top:406.95px;width:22px;height:0.8px;background:#9a9a9a"></div>
<div class="a" style="left:134.7px;top:408.9px;width:7.3px;height:7.3px;background:#e60023"></div>
<div class="t" style="left:10.5px;top:435.6px;width:10.5px;font-size:10px;color:#333;font-family:'Liberation Serif',serif;font-weight:bold;letter-spacing:.3px">13</div>
<div class="a" style="left:22.5px;top:430.1px;width:120px;height:68px;background:#f8f8f9;border:1px solid #dedede"></div>
<div class="a" style="left:24.5px;top:431.6px;width:3px;height:3px;background:#3f3f3f"></div>
<div class="a" style="left:27.5px;top:434.6px;width:5px;height:5px;background:#e60023"></div>
<div class="a" style="left:34.5px;top:436.3px;width:9px;height:1.8px;background:#d6204a;opacity:.75"></div>
<div class="a" style="left:46.5px;top:444.1px;width:20.5px;height:24px;background:#b08a6a;background:radial-gradient(ellipse at 50% 45%,#d9b08c 0,#b57f5a 45%,#8f6448 100%)"></div>
<div class="a" style="left:35.5px;top:469.1px;width:19px;height:19px;background:#cdb78e;background:radial-gradient(ellipse at 50% 50%,#d9c9a0 0,#c2a878 60%,#a89060 100%)"></div>
<div class="a" style="left:59.8px;top:469.1px;width:19px;height:19px;background:#666;background:radial-gradient(circle at 50% 50%,#c8c4bc 0,#8a8680 40%,#4b4a48 75%,#3a3a3a 100%)"></div>
<div class="a" style="left:84px;top:445.1px;width:14px;height:1.5px;background:#333"></div>
<div class="a" style="left:84px;top:448.6px;width:44px;height:0.9px;background:#9a9a9a"></div>
<div class="a" style="left:84px;top:450.65px;width:44px;height:0.9px;background:#9a9a9a"></div>
<div class="a" style="left:84px;top:452.7px;width:22px;height:0.9px;background:#9a9a9a"></div>
<div class="a" style="left:84px;top:456.1px;width:14px;height:1.5px;background:#333"></div>
<div class="a" style="left:84px;top:459.6px;width:44px;height:0.9px;background:#9a9a9a"></div>
<div class="a" style="left:84px;top:461.65px;width:44px;height:0.9px;background:#9a9a9a"></div>
<div class="a" style="left:84px;top:463.7px;width:44px;height:0.9px;background:#9a9a9a"></div>
<div class="a" style="left:84px;top:465.75px;width:44px;height:0.9px;background:#9a9a9a"></div>
<div class="a" style="left:84px;top:467.8px;width:30px;height:0.9px;background:#9a9a9a"></div>
<div class="a" style="left:84px;top:471.1px;width:10px;height:1.5px;background:#333"></div>
<div class="a" style="left:84px;top:474.6px;width:44px;height:0.9px;background:#9a9a9a"></div>
<div class="a" style="left:84px;top:476.65px;width:44px;height:0.9px;background:#9a9a9a"></div>
<div class="a" style="left:84px;top:478.7px;width:44px;height:0.9px;background:#9a9a9a"></div>
<div class="a" style="left:84px;top:480.75px;width:44px;height:0.9px;background:#9a9a9a"></div>
<div class="a" style="left:84px;top:482.8px;width:44px;height:0.9px;background:#9a9a9a"></div>
<div class="a" style="left:84px;top:484.85px;width:18px;height:0.9px;background:#9a9a9a"></div>
<div class="a" style="left:134.7px;top:489.6px;width:7.3px;height:7.3px;background:#e60023"></div>
<div class="t" style="left:10.5px;top:516.3px;width:10.5px;font-size:10px;color:#333;font-family:'Liberation Serif',serif;font-weight:bold;letter-spacing:.3px">14</div>
<div class="a" style="left:22.5px;top:510.8px;width:120px;height:68px;background:#f8f8f9;border:1px solid #dedede"></div>
<div class="a" style="left:28px;top:518.8px;width:11.5px;height:11px;background:#e60023"></div>
<div class="a" style="left:40px;top:530.3px;width:19.5px;height:20px;background:#c8541f;background:radial-gradient(circle at 45% 30%,#f3dcc8 0,#f3dcc8 9%,rgba(243,220,200,0) 22%),radial-gradient(circle at 20% 80%,#8f3d1e 0,rgba(143,61,30,0) 45%),radial-gradient(circle at 80% 65%,#f08a3c 0,rgba(240,138,60,0) 50%),#cf5a22"></div>
<div class="a" style="left:25px;top:550.3px;width:34.5px;height:14px;background:#3f3f3f"></div>
<div class="t" style="left:67.3px;top:538px;width:46px;font-size:7.6px;color:#d6204a;transform:scaleX(.73);transform-origin:0 50%">PART FOUR</div>
<div class="a" style="left:67.5px;top:547.3px;width:13px;height:2.5px;background:#9a9a9a;opacity:.8"></div>
<div class="a" style="left:115.7px;top:530.3px;width:4.7px;height:5px;background:#3f3f3f"></div>
<div class="a" style="left:120.4px;top:535.3px;width:20.6px;height:42px;background:#e60023"></div>
<div class="t" style="left:10.5px;top:597.25px;width:10.5px;font-size:9.5px;color:#333;font-family:'Liberation Serif',serif;font-weight:bold;letter-spacing:.3px">15</div>
<div class="a" style="left:22.5px;top:591.5px;width:120px;height:12.5px;background:#fff;border:1px solid #dedede;border-bottom:0"></div>
<div class="a" style="left:24.5px;top:593px;width:3px;height:3px;background:#3f3f3f"></div>
<div class="a" style="left:27.5px;top:596px;width:5px;height:5px;background:#e60023"></div>
<div class="a" style="left:35px;top:597px;width:20px;height:1.8px;background:#d6204a;opacity:.75"></div>
<div class="a" style="left:35px;top:601px;width:17px;height:1.3px;background:#999"></div>
<div class="a" style="left:43px;top:603px;width:79px;height:1px;background:#555"></div>
<div class="a" style="left:147.3px;top:364.5px;width:5px;height:101.5px;background:#a9a9a9;border-radius:2.500px"></div>
<svg style="left:71.7px;top:609.2px" width="11" height="11" stroke="#444" stroke-width="1.100"><path d="M5.500 0v11M0 5.500h11"/></svg>
<svg style="left:160.5px;top:599.5px" width="3" height="4" ><path d="M3 0v4L0 2z" fill="#888"/></svg>
<div class="a" style="left:169.4px;top:596.7px;width:651.2px;height:10px;background:#f9f9f9;border:1px solid #d4d4d4;border-radius:5px"></div>
<svg style="left:853.5px;top:599.5px" width="3" height="4" ><path d="M0 0v4l3-2z" fill="#666"/></svg>
<svg style="left:161.5px;top:611.5px" width="10.5" height="10" fill="none" stroke="#555" stroke-width=".9"><path d="M.5 .5h9.500v7H3.500L.5 9.500z M2.500 3h5.500M2.500 5.200h4"/></svg>
<div class="t" style="left:176.5px;top:612.1px;width:75.3px;font-size:9.4px;color:#555">单击此处添加备注</div>
<div class="a" style="left:861.5px;top:155px;width:9.5px;height:441px;background:#e0e0e0"></div>
<svg style="left:863.5px;top:164px" width="4" height="3" ><path d="M0 3h4L2 0z" fill="#555"/></svg>
<div class="a" style="left:861.8px;top:351.5px;width:8.2px;height:27.2px;background:#fafafa;border:1px solid #cfcfcf;border-radius:4px"></div>
<svg style="left:863.5px;top:563.5px" width="4" height="3" ><path d="M0 0h4L2 3z" fill="#555"/></svg>
<svg style="left:863.5px;top:573.5px" width="4" height="5" ><path d="M0 2h4L2 0z M0 3h4L2 5z" fill="#555"/></svg>
<svg style="left:863.5px;top:585.5px" width="4" height="5" ><path d="M0 0h4L2 2z M0 3h4L2 5z" fill="#555"/></svg>

<!-- p50_slide -->
<div class="a" style="left:168.5px;top:185px;width:681.5px;height:382.8px;background:#f8f8f9;box-shadow:0 0 4px 1px rgba(0,0,0,.3)"></div>
<div class="a" style="left:168.5px;top:185px;width:15.7px;height:15.7px;background:#3f3f3f"></div>
<div class="a" style="left:184.2px;top:200.7px;width:27px;height:27.8px;background:#e60023"></div>
<div class="t" style="left:226px;top:207.8px;width:56px;font-size:14px;color:#dc2348">项目规划</div>
<div class="t" style="left:238px;top:261.5px;width:55.5px;font-size:14px;color:#111;font-weight:bold">创业初期</div>
<div class="t" style="left:261.5px;top:284.53px;width:409px;font-size:11.33px;color:#262626">计划成立工作室，申请学校创匠项目，并筹备开发“木社”木雕艺术设计网站。采</div>
<div class="t" style="left:238px;top:298.65px;width:432.5px;font-size:11.33px;color:#262626">用O2O模式，线上线下同时发展，采用产品、质量、服务、技术一体化的发展模式，用</div>
<div class="t" style="left:238px;top:312.77px;width:432.5px;font-size:11.33px;color:#262626">符合潮流的创意、贴心的服务满足消费者对于个性化物品的需求。在这一阶段我们公司</div>
<div class="t" style="left:238px;top:326.89px;width:432.5px;font-size:11.33px;color:#262626">将以清远地区高职院校为目标市场，通过充分的市场调研，了解消费者的需求和偏好，</div>
<div class="t" style="left:238px;top:341.01px;width:432.5px;font-size:11.33px;color:#262626">尽力做到使消费者满意，提升本公司的行业影响力和品牌知名度，采用“口碑营销”，</div>
<div class="t" style="left:238px;top:355.13px;width:79.31px;font-size:11.33px;color:#262626">扩大市场规模。</div>
<div class="a" style="left:168.5px;top:386.3px;width:505px;height:2.2px;background:#444"></div>
<svg style="left:671px;top:383.5px" width="8" height="8" ><path d="M0 0l7.500 4L0 8z" fill="#444"/></svg>
<div class="a" style="left:231px;top:367.5px;width:40.5px;height:40px;background:#f8f8f9;border-radius:50%"></div>
<div class="a" style="left:233px;top:369.5px;width:36.5px;height:36px;background:#e60023;border-radius:50%"></div>
<div class="a" style="left:376px;top:367.5px;width:40.5px;height:40px;background:#f8f8f9;border-radius:50%"></div>
<div class="a" style="left:378px;top:369.5px;width:36.5px;height:36px;background:#e60023;border-radius:50%"></div>
<div class="t" style="left:375.3px;top:412.5px;width:55.8px;font-size:14px;color:#111;font-weight:bold">发展中期</div>
<div class="t" style="left:398.3px;top:433.63px;width:271.92px;font-size:11.33px;color:#262626">将创意产品推出市场，向外推广我们的网站，并对接各</div>
<div class="t" style="left:375.3px;top:447.75px;width:294.58px;font-size:11.33px;color:#262626">个岭南园林网络销售平台，搭建手工艺者与顾客之间交流的</div>
<div class="t" style="left:375.3px;top:461.88px;width:299.08px;font-size:11.33px;color:#262626">平台，增强产品竞争优势。以清远市为中心向周围城市辐射，</div>
<div class="t" style="left:375.3px;top:476px;width:294.58px;font-size:11.33px;color:#262626">将市场范围拓展至整个广东省，着眼于省内各大高校学生资</div>
<div class="t" style="left:375.3px;top:490.12px;width:299.08px;font-size:11.33px;color:#262626">源，期间招募校园代理，进一步完善网络营销，提升竞争力，</div>
<div class="t" style="left:375.3px;top:504.23px;width:260.59px;font-size:11.33px;color:#262626">并致力于微信公众号的打造，进一步拓展业务范围。</div>
<div class="a" style="left:712.4px;top:339.8px;width:95.2px;height:95.2px;background:#e60023;border-radius:50%"></div>
<svg style="left:738px;top:366px" width="44" height="43" fill="none" stroke="#fff" stroke-width="1.700"><rect x="2" y="2.200" width="9.500" height="38.300" rx="3.500"/><rect x="17.600" y="17.300" width="9.200" height="23.200" rx="3.500"/><rect x="32.700" y="9.600" width="9.500" height="30.900" rx="3.500"/></svg>
<div class="a" style="left:808.4px;top:527.3px;width:41.6px;height:40.5px;background:#e60023"></div>

<!-- p60_panel -->
<div class="a" style="left:871px;top:155px;width:185px;height:472px;background:#f1f1f1"></div>
<div class="t" style="left:876.8px;top:162.75px;width:41.7px;font-size:8.5px;color:#222">自定义动画</div>
<svg style="left:921px;top:166.5px" width="4" height="3" ><path d="M0 0h4L2 2.500z" fill="#555"/></svg>
<svg style="left:1042.5px;top:163.5px" width="7" height="7" stroke="#aaa" stroke-width=".9"><path d="M0 0l7 7M7 0l-7 7"/></svg>
<svg style="left:878px;top:184px" width="9" height="9" ><path d="M.5 .5h5v5h-5z" fill="#4a78c8" stroke="#39599a" stroke-width=".6"/><path d="M3 3h5.500v5.500H3z" fill="#f3c04a" stroke="#b98a1c" stroke-width=".6"/><path d="M6 5.500l3 2-1.300.3-.5 1.300z" fill="#fff" stroke="#333" stroke-width=".5"/></svg>
<div class="t" style="left:890.9px;top:184.25px;width:34px;font-size:8.5px;color:#444">选择窗格</div>
<div class="t" style="left:878.6px;top:204.05px;width:47.4px;font-size:9.5px;color:#d9622b">自定义动画</div>
<div class="a" style="left:878.6px;top:220px;width:55px;height:14px;background:#fcfcfc;border:1px solid #e6e6e6;border-radius:2px"></div>
<div class="a" style="left:938.7px;top:220px;width:55.8px;height:14px;background:#fcfcfc;border:1px solid #e6e6e6;border-radius:2px"></div>
<div class="a" style="left:999.7px;top:220px;width:40.1px;height:14px;background:#fcfcfc;border:1px solid #e6e6e6;border-radius:2px"></div>
<svg style="left:881px;top:223.5px" width="6" height="6" stroke="#bbb" stroke-width="1"><path d="M.5 5.500L5 1"/></svg>
<div class="t" style="left:890px;top:222.95px;width:33.5px;font-size:8.5px;color:#b4b4b4">添加效果</div>
<svg style="left:926.5px;top:226.5px" width="4" height="3" ><path d="M0 0h4L2 2.500z" fill="#bbb"/></svg>
<svg style="left:940.5px;top:222.5px" width="8" height="9" fill="none" stroke="#bbb" stroke-width=".8"><path d="M4 .5l1 2.500 2.500.3-1.800 1.800.5 2.600L4 6.500 1.800 7.700l.5-2.600L.5 3.300 3 3z"/></svg>
<div class="t" style="left:950.5px;top:222.95px;width:33.5px;font-size:8.5px;color:#b4b4b4">智能动画</div>
<svg style="left:987px;top:226.5px" width="4" height="3" ><path d="M0 0h4L2 2.500z" fill="#bbb"/></svg>
<svg style="left:1006.5px;top:222.5px" width="6" height="8" fill="none" stroke="#bbb" stroke-width=".9"><path d="M0 1.500h6M1 1.500v6h4v-6M2 .5h2"/></svg>
<div class="t" style="left:1016.5px;top:222.95px;width:17px;font-size:8.5px;color:#b4b4b4">删除</div>
<div class="t" style="left:878.6px;top:248.7px;width:37.5px;font-size:9.4px;color:#a2a2a2">修改效果</div>
<div class="t" style="left:878.6px;top:265.35px;width:20px;font-size:8.5px;color:#a8a8a8">开始:</div>
<div class="a" style="left:901px;top:262.6px;width:147.2px;height:14px;background:#fbfbfb;border:1px solid #e2e2e2;border-radius:3px"></div>
<svg style="left:1041px;top:269.1px" width="4" height="3" ><path d="M0 0h4L2 2.500z" fill="#bbb"/></svg>
<div class="t" style="left:878.6px;top:284.15px;width:20px;font-size:8.5px;color:#a8a8a8">属性:</div>
<div class="a" style="left:901px;top:281.4px;width:147.2px;height:14px;background:#fbfbfb;border:1px solid #e2e2e2;border-radius:3px"></div>
<svg style="left:1041px;top:287.9px" width="4" height="3" ><path d="M0 0h4L2 2.500z" fill="#bbb"/></svg>
<div class="t" style="left:878.6px;top:302.95px;width:20px;font-size:8.5px;color:#a8a8a8">速度:</div>
<div class="a" style="left:901px;top:300.2px;width:147.2px;height:14px;background:#fbfbfb;border:1px solid #e2e2e2;border-radius:3px"></div>
<svg style="left:1041px;top:306.7px" width="4" height="3" ><path d="M0 0h4L2 2.500z" fill="#bbb"/></svg>
<div class="a" style="left:878px;top:318.6px;width:170.4px;height:238.6px;background:#fff;border:1px solid #dcdcdc"></div>
<div class="t" style="left:885.7px;top:322.95px;width:153px;font-size:8.5px;color:#555">选中幻灯片的某个元素，然后单击“添加</div>
<div class="t" style="left:885.7px;top:334.75px;width:68px;font-size:8.5px;color:#555">效果”添加动画。</div>
<div class="t" style="left:878.3px;top:565.15px;width:34px;font-size:8.5px;color:#ababab">重新排序</div>
<div class="a" style="left:917.8px;top:561.7px;width:15.5px;height:14.7px;background:#fbfbfb;border:1px solid #e6e6e6;border-radius:2px"></div>
<div class="a" style="left:938.4px;top:561.7px;width:15.5px;height:14.7px;background:#fbfbfb;border:1px solid #e6e6e6;border-radius:2px"></div>
<svg style="left:920.8px;top:564.5px" width="9.5" height="9" ><path d="M4.700 0l4.500 4.500h-2.500v4.500h-4v-4.500H.2z" fill="#c8c8c8"/></svg>
<svg style="left:941.4px;top:564.5px" width="9.5" height="9" ><path d="M4.700 9L.2 4.500h2.500V0h4v4.500h2.500z" fill="#c8c8c8"/></svg>
<div class="a" style="left:878.3px;top:581.8px;width:40.7px;height:13.8px;background:#fbfbfb;border:1px solid #e2e2e2;border-radius:2px"></div>
<svg style="left:884.5px;top:585px" width="7" height="7" ><circle cx="3.500" cy="3.500" r="3" fill="none" stroke="#bbb" stroke-width=".8"/><path d="M2.700 2v3l2.500-1.500z" fill="#bbb"/></svg>
<div class="t" style="left:895.5px;top:584.75px;width:17px;font-size:8.5px;color:#b4b4b4">播放</div>
<div class="a" style="left:923.6px;top:581.8px;width:66px;height:13.8px;background:#fdfdfd;border:1px solid #d8d8d8;border-radius:2px"></div>
<svg style="left:929.5px;top:584.5px" width="10" height="9" ><path d="M.5 .5h8v5.500h-8z M4.500 6v2M2.500 8.500h4" fill="none" stroke="#555" stroke-width=".9"/><circle cx="7" cy="4" r="2.600" fill="#f0693e"/><path d="M6.300 2.800v2.400l2-1.200z" fill="#fff"/></svg>
<div class="t" style="left:941.5px;top:584.75px;width:42.5px;font-size:8.5px;color:#333">幻灯片播放</div>
<div class="a" style="left:879px;top:603px;width:9px;height:9px;background:#fff;border:1px solid #999;border-radius:1.500px"></div>
<svg style="left:880.5px;top:605px" width="6" height="5" fill="none" stroke="#d9622b" stroke-width="1.100"><path d="M.5 2.500l2 2L5.500 .5"/></svg>
<div class="t" style="left:890.7px;top:603.45px;width:33.7px;font-size:8.5px;color:#333">自动预览</div>
<svg style="left:853.5px;top:599.5px" width="3" height="4" ></svg>
<div class="a" style="left:1056px;top:155px;width:30px;height:472px;background:#ebebeb"></div>
<div class="a" style="left:1064.3px;top:163.7px;width:11px;height:0.8px;background:#c4c4c4"></div>
<div class="a" style="left:1064.3px;top:166px;width:11px;height:0.8px;background:#c4c4c4"></div>
<div class="a" style="left:1058.8px;top:175px;width:22.5px;height:23.5px;background:#d2d2d2;border-radius:3px"></div>
<svg style="left:1063.9px;top:180.8px" width="12" height="12" fill="none" stroke="#525252" stroke-width=".9"><path d="M6 .7l1.500 3.500 3.800.4-2.800 2.600.8 3.800L6 9.100 2.700 11l.8-3.800L.700 4.600l3.800-.4z"/><path d="M3 11.500l-.5 1M6 11.500v1M9 11.500l.5 1" stroke-width=".7"/></svg>
<svg style="left:1063.9px;top:206px" width="12" height="12" fill="none" stroke="#525252" stroke-width=".9"><path d="M2.500 2.500V.5h9v7h-2 M.5 4.500h8v7h-8z"/><path d="M3 8h3M4.800 6.500L6.300 8 4.800 9.500" stroke-width=".8"/></svg>
<svg style="left:1063.9px;top:231.4px" width="12" height="12" fill="none" stroke="#525252" stroke-width=".9"><path d="M4.500 3.500V.5h7.500v7H9"/><circle cx="4.500" cy="7.500" r="4"/></svg>
<svg style="left:1063.9px;top:256.8px" width="12" height="12" fill="none" stroke="#525252" stroke-width=".9"><circle cx="6" cy="5" r="4.500"/><path d="M3.500 8.500L2.500 12l3.500-1.500L9.500 12l-1-3.500"/><path d="M6 2.800l.7 1.500 1.600.2-1.200 1.100.3 1.600L6 6.400l-1.400.8.300-1.600-1.200-1.100 1.600-.2z" stroke-width=".6"/></svg>
<svg style="left:1063.9px;top:282.2px" width="12" height="12" fill="none" stroke="#525252" stroke-width=".9"><path d="M6 .5L11.500 11H.5z M3 8h6 M4 6h4" /><circle cx="6" cy="4" r=".8"/></svg>
<svg style="left:1063.9px;top:307.6px" width="12" height="12" fill="none" stroke="#525252" stroke-width=".9"><path d="M.5 .5h4.500v4.500H.5z M7 .5h4.500v4.500H7z M.5 7h4.500v4.500H.5z M7 7h4.500v4.500H7z M8 10.500l2.500-2.500"/></svg>
<svg style="left:1063.9px;top:333px" width="12" height="12" fill="none" stroke="#525252" stroke-width=".9"><path d="M.5 0v11.500H12 M3 11.500V7.500h2v4 M6 11.500V5h2v6.500 M9 11.500V2.500h2v9" /></svg>
<svg style="left:1063.9px;top:358.4px" width="12" height="12" fill="none" stroke="#525252" stroke-width=".9"><path d="M0 2h12M0 6h12M0 10h12"/><circle cx="8.500" cy="2" r="1.400" fill="#ebebeb"/><circle cx="3.500" cy="6" r="1.400" fill="#ebebeb"/><circle cx="7" cy="10" r="1.400" fill="#ebebeb"/></svg>
<svg style="left:1063.9px;top:383.8px" width="12" height="12" fill="none" stroke="#525252" stroke-width=".9"><path d="M2.500 2.500V.5h9v9h-2 M.5 2.500h9v9h-9z M.5 5h9"/><path d="M3 10l2-2.500 1.500 1.500 1-1 1.500 2z" stroke-width=".7"/></svg>
<svg style="left:1063.9px;top:409.2px" width="12" height="12" fill="none" stroke="#525252" stroke-width=".9"><path d="M4.500 2.500H.5v9h9V7.500 M4 8c.5-3.500 3-5 7-5 M8.500 .5L11.500 3 8.500 5.500"/></svg>
<svg style="left:1063.9px;top:434.6px" width="12" height="12" fill="none" stroke="#525252" stroke-width=".9"><path d="M.5 .5h11v3H.5z M1.500 3.500v8h9v-8 M4.500 6.500h3"/></svg>
<svg style="left:1063.9px;top:460px" width="12" height="12" fill="none" stroke="#525252" stroke-width=".9"><path d="M.5 1h11v10H.5z M.5 9l3-3.500 3 3 2-1.500 3 2.500"/><circle cx="8.500" cy="4" r="1"/></svg>
<svg style="left:1063.9px;top:485.4px" width="12" height="12" fill="none" stroke="#525252" stroke-width=".9"><path d="M.5 4h2.500L6.500 1v10L3 8H.5z M8.500 4c1 1 1 3 0 4 M10 2.500c1.800 2 1.800 5 0 7"/></svg>
<svg style="left:1063.9px;top:510.8px" width="12" height="12" fill="none" stroke="#525252" stroke-width=".9"><path d="M6 .5l5 2.800v5.400L6 11.500 1 8.700V3.300z"/><path d="M6.500 3.500L4.500 6.500h3L5.500 9" stroke-width=".8"/></svg>
<svg style="left:1063.9px;top:536.2px" width="12" height="12" fill="none" stroke="#525252" stroke-width=".9"><path d="M1.500 3A5.300 5.300 0 1 1 .7 6"/><path d="M0 1.500L1.500 3.500 3.500 2.500 M6 3v3.500l2 1.500"/></svg>
<svg style="left:1063.9px;top:561.6px" width="12" height="12" fill="none" stroke="#525252" stroke-width=".9"><circle cx="6" cy="6" r="5.500"/><path d="M4.200 4.700a1.800 1.800 0 1 1 2.600 1.600c-.6.3-.8.700-.8 1.300M6 8.800v.8"/></svg>
<svg style="left:1063.9px;top:587px" width="12" height="12" fill="none" stroke="#525252" stroke-width=".9"><path d="M6 .5l5 2.500v6L6 11.500 1 9V3z M1 3l5 2.500L11 3 M6 5.500v6" stroke="#c4c4c4"/></svg>
<div class="a" style="left:1076.5px;top:345.7px;width:9.5px;height:26px;background:#a8a8a8"></div>
<svg style="left:1079.5px;top:355.5px" width="4" height="7" fill="none" stroke="#fff" stroke-width="1"><path d="M.5 .5l3 3-3 3"/></svg>
<div class="a" style="left:1055px;top:618.4px;width:31px;height:8.6px;background:#c6c6c6"></div>
<svg style="left:1068px;top:621px" width="5" height="3" fill="none" stroke="#888" stroke-width=".8"><path d="M0 0l2.500 2.500L5 0"/></svg>
<div class="a" style="left:0px;top:627px;width:1086px;height:18px;background:#f4f4f4"></div>
<div class="t" style="left:7px;top:634.05px;width:55px;font-size:8.5px;color:#444">幻灯片 11 / 21</div>
<div class="t" style="left:77.9px;top:634.05px;width:43px;font-size:8.5px;color:#444">Office 主题</div>
<svg style="left:137.5px;top:633px" width="9" height="10.5" fill="none" stroke="#555" stroke-width=".8"><path d="M4.500 .5l4 1.500v3.500c0 2.500-2 4-4 4.700-2-.7-4-2.200-4-4.700V2z M3 3.800l3 3M6 3.800l-3 3"/></svg>
<div class="t" style="left:149.7px;top:634.05px;width:42.5px;font-size:8.5px;color:#444">文档未保护</div>
<svg style="left:207.5px;top:633px" width="12" height="10.5" ><path d="M0 .7h7M3.500 .7v8.800M2 9.500h3" fill="none" stroke="#555" stroke-width=".9"/><circle cx="8.300" cy="7.200" r="2.500" fill="#f0a23a"/></svg>
<div class="t" style="left:221.5px;top:634.05px;width:34px;font-size:8.5px;color:#444">缺失字体</div>
<svg style="left:755px;top:633.5px" width="11" height="10" fill="none" stroke="#444" stroke-width=".9"><path d="M0 .5h10M0 3.500h10M0 6.500h10M0 9.500h5"/><path d="M7 8.500h3.500L8.700 10.500z" fill="#444" stroke="none"/></svg>
<svg style="left:768.5px;top:638px" width="4" height="3" ><path d="M0 0h4L2 2.500z" fill="#555"/></svg>
<div class="a" style="left:776.5px;top:630px;width:15px;height:15px;background:#cfcfcf;border-radius:1px"></div>
<svg style="left:778.5px;top:633.5px" width="11" height="9.5" fill="none" stroke="#333" stroke-width="1"><path d="M.5 .5h10v8.500H.5z M3.500 .5v8.500 M3.500 7h7"/></svg>
<svg style="left:796.5px;top:633.5px" width="11" height="9.5" fill="none" stroke="#444" stroke-width=".9"><path d="M.5 .5h4v3.500h-4z M6.500 .5h4v3.500h-4z M.5 5.500h4v3.500h-4z M6.500 5.500h4v3.500h-4z"/></svg>
<svg style="left:814.5px;top:633.5px" width="11" height="9.5" fill="none" stroke="#444" stroke-width=".9"><path d="M5.500 1.500C4 .3 2 .3 .5 1v8c1.500-.7 3.500-.7 5 .5 1.500-1.200 3.500-1.200 5-.5V1c-1.500-.7-3.500-.7-5 .5z M5.500 1.500v8"/></svg>
<svg style="left:832.5px;top:633.5px" width="12" height="9.5" fill="none" stroke="#444" stroke-width=".9"><path d="M.5 .5h9v6.500h-9z M5 7v2M2.500 9.500h5"/><circle cx="8.500" cy="5" r="2.300" fill="#f4f4f4"/><path d="M7.800 3.800v2.400l2-1.200z" fill="#444" stroke="none"/></svg>
<div class="a" style="left:856.3px;top:630px;width:21.4px;height:15px;background:#f0693e;border-radius:2px 2px 0 0"></div>
<svg style="left:863.5px;top:633.5px" width="8" height="9" ><path d="M0 0v9l8-4.500z" fill="#fff"/></svg>
<svg style="left:881.5px;top:638px" width="4" height="3" ><path d="M0 0h4L2 2.500z" fill="#555"/></svg>
<div class="t" style="left:895.7px;top:634.05px;width:17.3px;font-size:8.5px;color:#444">75%</div>
<svg style="left:916.5px;top:638px" width="4" height="3" ><path d="M0 0h4L2 2.500z" fill="#555"/></svg>
<div class="a" style="left:927.5px;top:637.8px;width:8px;height:1.3px;background:#333"></div>
<div class="a" style="left:943.7px;top:638px;width:97.3px;height:0.8px;background:#9a9a9a"></div>
<div class="a" style="left:974px;top:634.5px;width:7.6px;height:7.6px;background:#f4f4f4;border:1px solid #333;border-radius:50%"></div>
<svg style="left:1048.5px;top:634.3px" width="8.5" height="8.5" stroke="#333" stroke-width="1.200"><path d="M4.200 0v8.500M0 4.200h8.500"/></svg>
<svg style="left:1067.5px;top:634.3px" width="8.5" height="8.5" fill="none" stroke="#555" stroke-width=".9"><path d="M0 2.500V0h2.500M6 0h2.500v2.500M8.500 6v2.500H6M2.500 8.500H0V6"/><circle cx="4.200" cy="4.200" r=".9" fill="#555" stroke="none"/></svg>

<!-- p70_video -->
<div class="a" style="left:1055px;top:83px;width:181px;height:24px;background:#2b2f33;border-radius:3px"></div>
<div class="t" style="left:1063.3px;top:91.4px;width:61.5px;font-size:7.8px;color:#fff">正在讲话: 贾晓松;</div>
<svg style="left:1180px;top:88px" width="32" height="14" ><path d="M0 9L9 0l5 5-9 9z M10 9l9-9 11 11-3.500 3H15z" fill="#4a4f54"/></svg>
<div class="a" style="left:1214.5px;top:88.5px;width:1px;height:13px;background:#5a5f64"></div>
<svg style="left:1221px;top:90.5px" width="10" height="8" ><path d="M4.500 0L0 3.500 4.500 7V4.800c2.500 0 4 .8 5.300 2.900C9.500 4.200 7.500 2.300 4.500 2.200z" fill="#c8c8c8"/></svg>
<svg style="left:1089.5px;top:115px" width="175" height="96" viewBox="0 0 175 96"><defs><filter id="b1" x="-5%" y="-5%" width="110%" height="110%"><feGaussianBlur stdDeviation=".9"/></filter>
<filter id="b2" x="-5%" y="-5%" width="110%" height="110%"><feGaussianBlur stdDeviation=".45"/></filter>
<clipPath id="c1"><rect width="175" height="96"/></clipPath></defs>
<g clip-path="url(#c1)"><g filter="url(#b1)">
<rect x="-3" y="-3" width="181" height="102" fill="#e6d9d5"/>
<rect x="118" y="14" width="30" height="72" fill="#e9dedb"/>
<rect x="146" y="12" width="22" height="75" fill="#f1ebe7"/>
<rect x="168" y="14" width="10" height="70" fill="#a98572"/>
<path d="M128 -2h50v16c-8 3-16-2-24 1s-16-1-26-5z" fill="#f7efee"/>
<path d="M131 0c3 6 4 12 3 26 4 3 8 1 9-4 0-8-2-16-4-22z" fill="#f3dcdc"/>
<path d="M129 0c3 1 8 3 10 8l-6 2z" fill="#efc4c2"/>
<rect x="-3" y="-3" width="53" height="102" fill="#cd8f44"/>
<path d="M14 -2h28l10 16v36l-8 4V22L20 2z" fill="#dca95e"/>
<path d="M-2 -2h16l6 6-22 8z" fill="#d89b4c"/>
<path d="M7 10l22 8v60l-24 8z" fill="#eed6a4"/>
<path d="M10 17l15 6v46l-16 6z" fill="#f9f0d8"/>
<path d="M9 40l16 2M9 56l16 0" stroke="#e2c48c" stroke-width="1.500"/>
<path d="M30 22l13 9v34l-13 14z" fill="#c6873e"/>
<path d="M33 30l8 5v26l-8 8z" fill="#d9a255"/>
<rect x="-3" y="85" width="34" height="14" fill="#8a572e"/>
<rect x="46" y="3" width="28" height="52" fill="#8c5140"/>
<path d="M50 4v50M57 4v50M64 4v50M70 4v50" stroke="#b17b68" stroke-width="2.200"/>
<rect x="72" y="9" width="19" height="42" fill="#f3f6ff"/>
<path d="M72 30h18v4H72z" fill="#cfd9ee"/>
<path d="M45 -2h35l-2 6c-6 2-12-1-18 1s-10 0-15-1z" fill="#e9e2da"/>
<path d="M112 -2c4 6 6 12 4 22l-3 8 5-2c3-9 3-20-1-28z" fill="#1d1712"/>
<rect x="84" y="30" width="25" height="26" fill="#cfa491"/>
<ellipse cx="94.500" cy="12" rx="22.500" ry="27" fill="#dab3a4"/>
<ellipse cx="103" cy="18" rx="9" ry="12" fill="#e3c0b2"/>
<ellipse cx="92" cy="21.500" rx="8.500" ry="2.800" fill="#c48b86"/>
<path d="M88 14l4 3 5-3" stroke="#c69c8c" stroke-width="1.500" fill="none"/>
<path d="M24 90c4-16 14-27 30-34l24-13c2-3 6-3 7 0l9 15 10-16c2-2 5-2 7 0l24 10c10 4 16 10 19 20l4 18z" fill="#a8cb3c"/>
<path d="M58 56c6 8 10 18 10 30" stroke="#95b832" stroke-width="2" fill="none"/>
<path d="M85 44l10 15 11-16-3-4-8 12-7-11z" fill="#d3ab99"/>
<path d="M78 44l6-2 10 18-8 6zM113 41l-6-1-12 20 9 5z" fill="#b5d548"/>
<path d="M137 52c8 5 13 12 15 20l3 24H62l10-10 30-14z" fill="#184f90"/>
<path d="M82 84l24-9 26-19" stroke="#8fb4e0" stroke-width="6" stroke-dasharray="1.100 1.300" fill="none"/>
<path d="M96 88l22-8 22-15" stroke="#5a8fd2" stroke-width="5" stroke-dasharray="1 1.500" fill="none"/>
<circle cx="129" cy="81" r="4" fill="none" stroke="#cfe0f4" stroke-width="1"/>
<circle cx="96" cy="63" r="1" fill="#1f4f86"/><circle cx="97" cy="70" r="1" fill="#1f4f86"/>
<path d="M148 74c6 2 10 8 10 16" stroke="#e9d9c8" stroke-width="1.200" fill="none"/>
<rect x="156" y="82" width="22" height="16" fill="#33261f"/>
</g>
<g filter="url(#b2)" fill="none" stroke="#14100e" stroke-width="2.300">
<rect x="72.500" y="-2" width="18" height="11.500" rx="2.500"/><rect x="94" y="-2" width="18.500" height="11.500" rx="2.500"/><path d="M90 3h4.500"/>
<rect x="95.500" y="-.5" width="15.500" height="8.500" fill="#57b6d8" stroke="none" opacity=".6"/>
<rect x="74" y="-.5" width="15" height="8.500" fill="#9fb4c4" stroke="none" opacity=".35"/>
</g>
<rect x="0" y="83" width="175" height="13" fill="#0c1a26" opacity=".82"/>
<rect x="0" y="94.500" width="175" height="1.500" fill="#3e6f80" opacity=".7"/>
</g></svg>
<svg style="left:1095.5px;top:199px" width="9" height="9" ><path d="M0 0h9v6.500H0z M2 8.500h5" fill="#fff" stroke="#fff" stroke-width=".8"/><path d="M2.500 4.500c.6-1.600 1.800-2 3-2v-1l1.800 1.600-1.800 1.600v-1c-1.200 0-2.200.1-3 .8z" fill="#1b2a36"/></svg>
<svg style="left:1107px;top:199px" width="8" height="10" ><rect x="2.300" y="0" width="3.400" height="6" rx="1.700" fill="#fff"/><path d="M.7 4.500a3.300 3.300 0 0 0 6.600 0M4 8v1.500M2.300 9.700h3.400" fill="none" stroke="#fff" stroke-width=".9"/></svg>
<div class="t" style="left:1117.5px;top:200.55px;width:5px;font-size:8.5px;color:#fff">6</div>
<div class="t" style="left:1125px;top:200.8px;width:21px;font-size:8px;color:#fff">吴钰翎</div>
<svg style="left:1089.5px;top:211.5px" width="174" height="98" viewBox="0 0 174 98"><defs><clipPath id="c2"><rect width="174" height="98"/></clipPath></defs>
<g clip-path="url(#c2)"><g filter="url(#b1)">
<rect x="-3" y="-3" width="180" height="104" fill="#cbb6a2"/>
<rect x="-3" y="-3" width="46" height="104" fill="#d2ad82"/>
<path d="M-2 0h44v6l-44-2z" fill="#c69258"/>
<path d="M-2 12l42 7v9l-42-7z" fill="#b67f49"/>
<path d="M-2 21l42 7v3l-42-6z" fill="#e0bd90"/>
<path d="M-2 42l40 2v8l-40-2z" fill="#b88148"/>
<path d="M-2 73l38 1v5l-38-1z" fill="#b98450"/>
<path d="M1 41c3-5 16-6 26 0v3H1z" fill="#3a3532"/>
<path d="M28 42c2-2 6-2 8 0v2h-8z" fill="#2a2624"/>
<rect x="0" y="3" width="12" height="8" fill="#7d8f84"/>
<rect x="0" y="64" width="10" height="6" fill="#6f7f78"/>
<rect x="0" y="79" width="36" height="22" fill="#a88a68"/>
<rect x="147" y="-2" width="14" height="102" fill="#cdb9a4"/>
<rect x="161" y="-2" width="17" height="102" fill="#a47a52"/>
<rect x="158" y="-2" width="4" height="102" fill="#c8a67e"/>
<path d="M41 2c0-3 3-4 6-4h88c8 0 12 4 12 10l1 28c0 6-3 9-8 9H44c-4 0-6-3-5-7z" fill="#191514"/>
<path d="M48 0h84c6 0 9 3 9 8l0 10H46z" fill="#221d1c"/>
<path d="M37 42h112l3 48H31z" fill="#1f1b1a"/>
<path d="M120 50l24 0 5 36h-26z" fill="#302b2a"/>
<path d="M124 52l4 32M130 52l4 32M136 52l4 32M142 52l3 32" stroke="#242020" stroke-width="2"/>
<path d="M38 42l3 0-7 50h-4z" fill="#8e8e92"/>
<path d="M40 60h34v14H40z" fill="#2b2625"/>
<path d="M28 84h134v18H28z" fill="#24242a"/>
<path d="M52 88l22-14 16 18zM98 92l20-18 26 10z" fill="#1b1b21"/>
<path d="M146 80l16 4v16h-16z" fill="#d9d9db"/>
<path d="M76 62h36v28H76z" fill="#c2977e"/>
<path d="M62 30C58 8 74 0 92 0c18 0 30 10 28 32-1 14-4 26-10 36-5 9-12 14-19 14-8 0-15-6-20-16-5-10-8-22-9-36z" fill="#d8ae98"/>
<ellipse cx="90" cy="9" rx="23" ry="9" fill="#e9c9b2"/>
<path d="M100 30c8 0 16 4 18 10-2 12-5 20-9 26-6-8-9-22-9-36z" fill="#cfa28c"/>
<path d="M61 28c-3 0-3 6-1 10l3 4zM119 26c3 0 3 7 1 11l-3 4z" fill="#c5937b"/>
<path d="M63 8c2-4 6-7 10-8-5 4-8 10-9 20l-2 6c-1-6-1-13 1-18zM113 2c5 3 8 9 8 20l-2 4c0-10-2-18-6-24z" fill="#8a6a58"/>
<ellipse cx="93" cy="51.500" rx="10.500" ry="3.300" fill="#e9c8ba"/>
<ellipse cx="93" cy="55.500" rx="8" ry="1.800" fill="#8c5a50"/>
<path d="M88 24l-3 18c2 3 9 3 11 0z" fill="#e6c1aa"/>
<path d="M84 44c2 2 8 2 11 0" stroke="#b98670" stroke-width="1.200" fill="none"/>
<path d="M80 66c6 8 18 8 24 0l-2 12c-5 5-15 5-20 0z" fill="#c49680"/>
</g>
<g filter="url(#b2)" fill="none" stroke="#8a7868" stroke-width=".9">
<rect x="66.500" y="22" width="19" height="10" rx="3"/><rect x="92" y="20.500" width="20" height="10.500" rx="3"/><path d="M85.500 26l6.500-1M112 24l8-2M66.500 26l-5 0"/>
<path d="M70 27.500h11M96 26h12" stroke="#4a362e" stroke-width="1.600"/>
<path d="M68 20l14-1M95 18l14-1" stroke="#6b5448" stroke-width="1.300"/>
</g>
<rect x="0" y="84" width="174" height="14" fill="#141414" opacity=".8"/>
</g></svg>
<svg style="left:1093.5px;top:297.5px" width="8" height="10" ><rect x="2.300" y="0" width="3.400" height="6" rx="1.700" fill="#fff"/><rect x="2.300" y="2.500" width="3.400" height="3.500" rx="1.600" fill="#2ed14a"/><path d="M.7 4.500a3.300 3.300 0 0 0 6.600 0M4 8v1.500M2.300 9.700h3.400" fill="none" stroke="#fff" stroke-width=".9"/></svg>
<div class="t" style="left:1105px;top:299px;width:22px;font-size:8px;color:#fff">贾晓松</div>
<div class="a" style="left:1089.5px;top:309.5px;width:174.5px;height:83.5px;background:#232323"></div>
<div class="a" style="left:1089.5px;top:393px;width:174.5px;height:14.3px;background:#0b0b0b"></div>
<div class="a" style="left:1162.6px;top:339.9px;width:27.8px;height:27.8px;background:#0a78ff;border-radius:50%"></div>
<div class="t" style="left:1166.8px;top:349.25px;width:19.5px;font-size:9.5px;color:#fff;font-weight:bold">黄品</div>
<svg style="left:1093px;top:395.5px" width="8" height="10" ><rect x="2.300" y="0" width="3.400" height="6" rx="1.700" fill="#ddd"/><path d="M.7 4.500a3.300 3.300 0 0 0 6.600 0M4 8v1.500M2.300 9.700h3.400" fill="none" stroke="#ddd" stroke-width=".9"/><path d="M.3 9L7.700 .5" stroke="#e5484d" stroke-width="1"/></svg>
<div class="t" style="left:1105px;top:396.55px;width:14.5px;font-size:7.5px;color:#fff">黄品</div>
<div class="a" style="left:1089.5px;top:407.3px;width:174.5px;height:83.5px;background:#232323"></div>
<div class="a" style="left:1089.5px;top:490.8px;width:174.5px;height:14.4px;background:#0b0b0b"></div>
<div class="a" style="left:1162.6px;top:437.7px;width:27.8px;height:27.8px;background:#0a78ff;border-radius:50%"></div>
<div class="t" style="left:1166.8px;top:447.05px;width:19.5px;font-size:9.5px;color:#fff;font-weight:bold">泽挺</div>
<div class="a" style="left:1090px;top:490.8px;width:32px;height:14.4px;background:#f5a623"></div>
<div class="t" style="left:1094.5px;top:494.4px;width:23px;font-size:7.8px;color:#fff;font-weight:bold">主持人</div>
<svg style="left:1126px;top:493.5px" width="8" height="10" ><rect x="2.300" y="0" width="3.400" height="6" rx="1.700" fill="#ddd"/><path d="M.7 4.500a3.300 3.300 0 0 0 6.600 0M4 8v1.500M2.300 9.700h3.400" fill="none" stroke="#ddd" stroke-width=".9"/><path d="M.3 9L7.700 .5" stroke="#e5484d" stroke-width="1"/></svg>
<div class="t" style="left:1137.5px;top:494.55px;width:51px;font-size:7.5px;color:#fff">双创中心蓝泽挺</div>
<div class="a" style="left:1089.5px;top:505.2px;width:174.5px;height:83px;background:#232323"></div>
<div class="a" style="left:1089.5px;top:588px;width:174.5px;height:14.6px;background:#0b0b0b"></div>
<svg style="left:1162.5px;top:535px" width="28" height="28" viewBox="0 0 28 28"><defs><clipPath id="c3"><circle cx="14" cy="14" r="14"/></clipPath></defs>
<g clip-path="url(#c3)"><rect width="28" height="28" fill="#d9dcd7"/>
<g filter="url(#b2)"><path d="M10 9c1-4 7-5 9-1 2 3 1 6 0 8l1 8h-6l-5-3c-2-3 0-8 1-12z" fill="#a86a3c"/>
<path d="M13 9c2-2 5-1 5 2s-1 5-3 5-3-4-2-7z" fill="#f0d9c8"/>
<path d="M15 14l6 1 1 9-5 1z" fill="#d8302a"/><path d="M7 19h8v3H7z" fill="#ece6de"/></g></g>
<circle cx="14" cy="14" r="13.700" fill="none" stroke="#c9ccc6" stroke-width=".6"/></svg>
<div class="a" style="left:1090px;top:588px;width:48px;height:14.6px;background:#19c37d"></div>
<div class="t" style="left:1093.5px;top:591.6px;width:40.5px;font-size:7.8px;color:#fff;font-weight:bold">联席主持人</div>
<div class="a" style="left:1140px;top:582.7px;width:73px;height:19.9px;background:#0e0e0e;opacity:.92"></div>
<svg style="left:1143.5px;top:590.5px" width="8" height="10" ><rect x="2.300" y="0" width="3.400" height="6" rx="1.700" fill="#777"/><path d="M.7 4.500a3.300 3.300 0 0 0 6.600 0M4 8v1.500M2.300 9.700h3.400" fill="none" stroke="#777" stroke-width=".9"/><path d="M.3 9L7.700 .5" stroke="#e5484d" stroke-width="1"/></svg>
<div class="t" style="left:1154.5px;top:592.05px;width:28.5px;font-size:7.5px;color:#6e6e6e">晓玲老师</div>
<svg style="left:1173px;top:590.5px" width="8" height="5" fill="none" stroke="#e8e8e8" stroke-width="1.100"><path d="M.5 .5l3.500 3.500L7.500 .5"/></svg>

</body>
</html>
